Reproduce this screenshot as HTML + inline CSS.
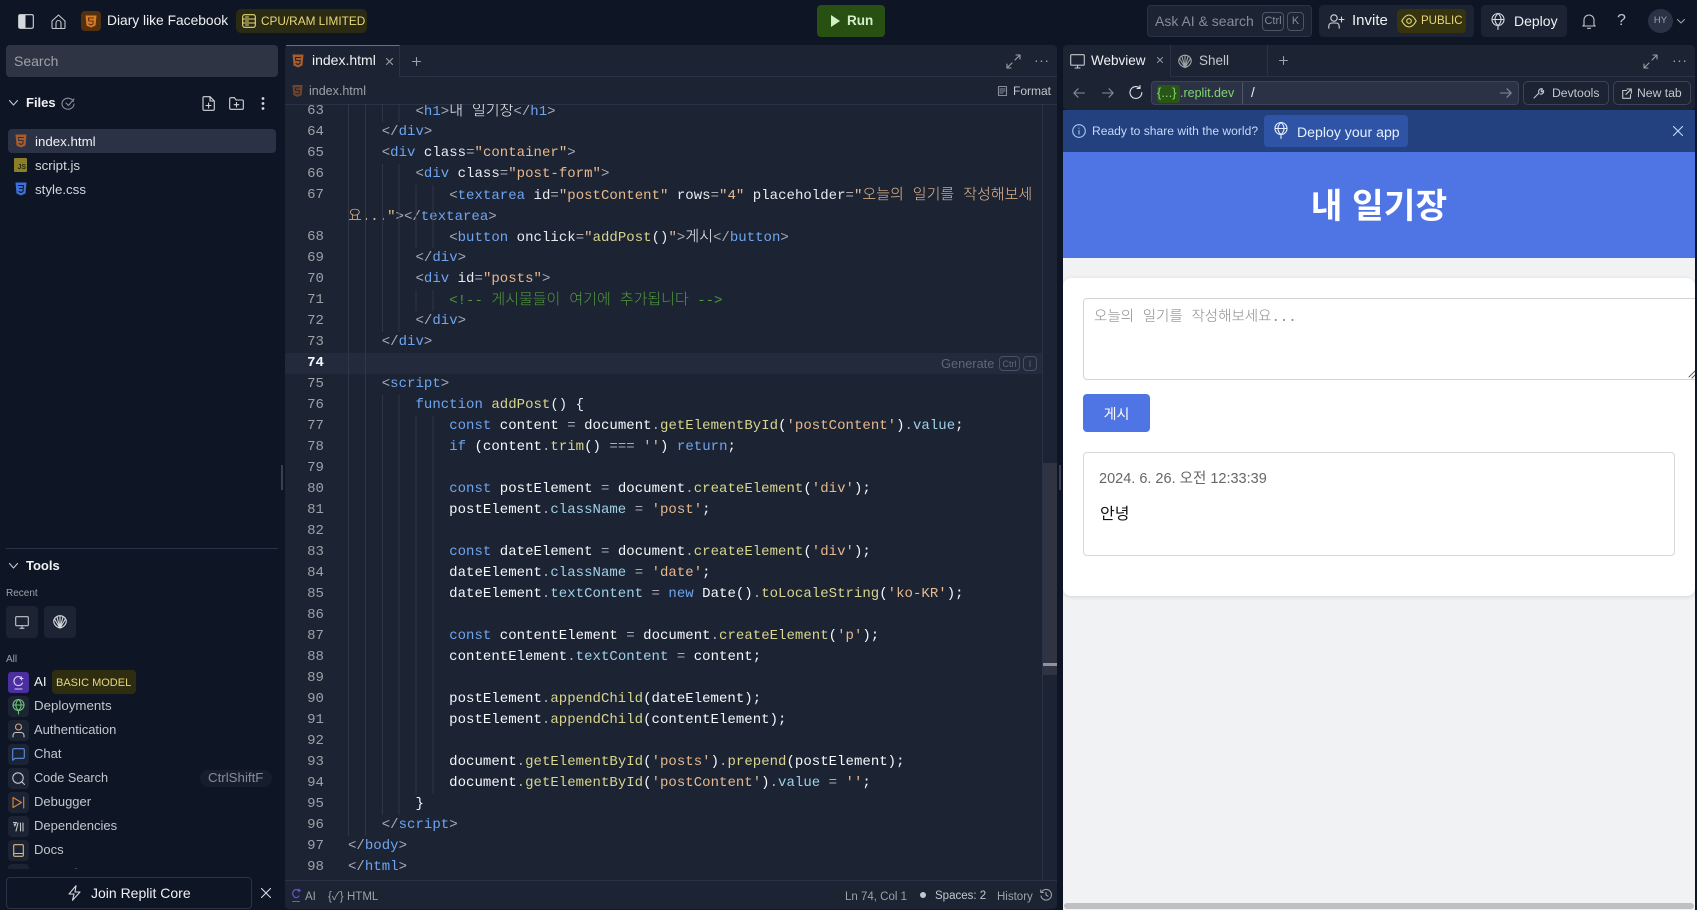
<!DOCTYPE html>
<html lang="ko"><head><meta charset="utf-8"><title>Diary like Facebook</title>
<style>
*{box-sizing:border-box}
html,body{margin:0;padding:0;width:1697px;height:910px;overflow:hidden;background:#0e1525}
body{font-family:"Liberation Sans","Noto Sans CJK KR",sans-serif;color:#c2c8cc;position:relative;font-size:13.3px}
.a{position:absolute}
.t{position:absolute;white-space:pre;line-height:20px}
svg{position:absolute;fill:none;stroke:currentColor;stroke-width:1.1;stroke-linecap:round;stroke-linejoin:round;overflow:visible}
.box{position:absolute;border-radius:4px}
.kbd{position:absolute;border:1px solid #4e5569;border-radius:4px;text-align:center;font-size:11px;color:#9da2a6;line-height:17px;height:19px}
#code{position:absolute;left:285px;top:104px;width:758px;height:776px;overflow:hidden;font-family:"Liberation Mono","Noto Sans CJK KR",monospace;font-size:14px;letter-spacing:.03px;color:#f5f9fc}
#in{position:absolute;left:0;right:0;top:-3px}
.l{position:relative;height:21px;line-height:21px;padding-left:63px;white-space:pre}
.l:before{content:"";position:absolute;left:63px;top:0;height:21px;width:0;background:repeating-linear-gradient(90deg,#2f3648 0 1px,transparent 1px 16.9px)}
.g1:before{width:2px}.g2:before{width:18px}.g3:before{width:35px}.g4:before{width:52px}.g5:before{width:69px}.g6:before{width:86px}.g7:before{width:103px}
.n{position:absolute;left:0;width:39px;text-align:right;font-style:normal;color:#9da2a6}
.p{color:#a8adb8}.b{color:#6fa5f0}.s{color:#e7b98d}.f{color:#d9d68d}.v{color:#9fd0e8}.c{color:#4f9a3c}.w{color:#e8edf2}
.k{font-size:15px;font-weight:300;letter-spacing:0}
.side{color:#c2c8cc}
.sq{position:absolute;left:8px;width:21px;height:21px;background:#1c2333;border-radius:4px}
</style></head><body>

<!-- TOP BAR -->
<svg style="left:18px;top:14px;color:#d5d8dc" width="16" height="15" viewBox="0 0 16 15"><rect x=".7" y=".7" width="14.6" height="13.6" rx="1.5"/><rect x="1" y="1" width="6.5" height="13" fill="#d5d8dc" stroke="none"/></svg>
<svg style="left:51px;top:14px;color:#c2c8cc" width="15" height="15" viewBox="0 0 15 15"><path d="M1 7 7.5 1 14 7v6.5a1 1 0 0 1-1 1H2a1 1 0 0 1-1-1z"/><path d="M5 14.500V9a2.500 2.500 0 0 1 5 0v5.500"/></svg>
<div class="box" style="left:81px;top:11px;width:20px;height:20px;background:#55300f;border-radius:4px"></div>
<svg style="left:85px;top:15px" width="12" height="13" viewBox="0 0 12 13"><path d="M.5.500h11l-1 10L6 12.500 1.500 10.500z" fill="#d97c2a" stroke="none"/><path d="M8.500 3h-5l.3 3h4.400l-.3 3L6 10 4 9" stroke="#55300f" stroke-width="1.100"/></svg>
<div class="t" style="left:107px;top:11px;font-size:13.800px;color:#f0f1f2">Diary like Facebook</div>
<div class="box" style="left:236px;top:9px;width:131px;height:24px;background:#2b2b14;border-radius:5px"></div>
<svg style="left:242px;top:14px;color:#e8d77a" width="14" height="14" viewBox="0 0 14 14"><rect x=".7" y=".7" width="12.600" height="12.600" rx="2"/><path d="M.7 5h12.600M.7 9h12.600M3.500 3h3M3.500 7h3M3.500 11h3"/></svg>
<div class="t" style="left:261px;top:11px;font-size:11.800px;color:#e8d77a">CPU/RAM LIMITED</div>

<div class="box" style="left:817px;top:5px;width:68px;height:32px;background:#275012;border-radius:4px"></div>
<svg style="left:831px;top:15px" width="9" height="12" viewBox="0 0 9 12"><path d="M0 0l9 6-9 6z" fill="#d3f0c0" stroke="none"/></svg>
<div class="t" style="left:847px;top:11px;font-size:13.500px;font-weight:bold;color:#d7eecb">Run</div>

<div class="box" style="left:1147px;top:5px;width:165px;height:32px;background:#1c2333;border:1px solid #2b3245"></div>
<div class="t" style="left:1155px;top:11px;font-size:14px;color:#878c99">Ask AI &amp; search</div>
<div class="kbd" style="left:1262px;top:12px;width:22px;color:#878c99">Ctrl</div>
<div class="kbd" style="left:1287px;top:12px;width:17px;color:#878c99">K</div>

<div class="box" style="left:1319px;top:5px;width:155px;height:32px;background:#1c2333"></div>
<svg style="left:1328px;top:14px;color:#d5d8dc" width="17" height="15" viewBox="0 0 17 15"><circle cx="6" cy="4" r="3.200"/><path d="M.8 14.200V12a3 3 0 0 1 3-3h4.400a3 3 0 0 1 3 3v2.200M13.500 3v5M11 5.500h5"/></svg>
<div class="t" style="left:1352px;top:11px;font-size:15px;color:#f0f1f2">Invite</div>
<div class="box" style="left:1397px;top:9px;width:69px;height:24px;background:#35340f"></div>
<svg style="left:1401px;top:14px;color:#e8d77a" width="16" height="14" viewBox="0 0 16 14"><path d="M.8 7C3 3 5.300 1 8 1s5 2 7.200 6c-2.200 4-4.500 6-7.200 6S3 11 .8 7z"/><circle cx="8" cy="7" r="2.300"/></svg>
<div class="t" style="left:1421px;top:11px;font-size:11.500px;color:#e8d77a">PUBLIC</div>

<div class="box" style="left:1481px;top:5px;width:86px;height:32px;background:#1c2333"></div>
<svg style="left:1491px;top:13px;color:#d5d8dc" width="14" height="17" viewBox="0 0 14 17"><circle cx="7" cy="6.500" r="6"/><path d="M1 6.500h12M7 .5c-4 3.500-4 8.500 0 12M7 .5c4 3.500 4 8.500 0 12M7 12.500v4"/></svg>
<div class="t" style="left:1514px;top:11px;font-size:14px;color:#f0f1f2">Deploy</div>
<svg style="left:1582px;top:14px;color:#c2c8cc" width="14" height="15" viewBox="0 0 14 15"><path d="M2 11V6a5 5 0 0 1 10 0v5l1.200 1H.8zM5.500 14.300h3"/></svg>
<div class="t" style="left:1617px;top:11px;font-size:16px;color:#c2c8cc">?</div>
<div class="a" style="left:1648px;top:9px;width:25px;height:24px;border-radius:50%;background:#2b3245;color:#9da2a6;font-size:9.500px;line-height:24px;text-align:center">HY</div>
<svg style="left:1677px;top:19px;color:#9da2a6" width="8" height="5" viewBox="0 0 8 5"><path d="M.5.500 4 4 7.500.5"/></svg>

<!-- SIDEBAR -->
<div class="box" style="left:6px;top:45px;width:272px;height:32px;background:#2f3444;border-radius:4px"></div>
<div class="t" style="left:14px;top:51px;font-size:14px;color:#9da2a6">Search</div>
<svg style="left:9px;top:100px;color:#c2c8cc" width="9" height="6" viewBox="0 0 9 6"><path d="M.5.500 4.500 5 8.500.5"/></svg>
<div class="t" style="left:26px;top:93px;font-size:13px;font-weight:bold;color:#f0f1f2">Files</div>
<svg style="left:61px;top:97px;color:#878c99" width="14" height="13" viewBox="0 0 14 13"><path d="M12.500 4.500A6 5.500 0 1 0 13 7M5 6l2.500 2.500L13 2"/></svg>
<svg style="left:202px;top:96px;color:#d5d8dc" width="13" height="15" viewBox="0 0 13 15"><path d="M1 1.500A1 1 0 0 1 2 .7h6L12.300 5v8.300a1 1 0 0 1-1 1H2a1 1 0 0 1-1-1zM8 .7V5h4.300M6.600 7v5M4 9.500h5"/></svg>
<svg style="left:229px;top:97px;color:#d5d8dc" width="15" height="13" viewBox="0 0 15 13"><path d="M.7 1.700a1 1 0 0 1 1-1h3.800L7 3h6.300a1 1 0 0 1 1 1v7.300a1 1 0 0 1-1 1H1.700a1 1 0 0 1-1-1zM7.500 5.500v4.500M5.200 7.700h4.600"/></svg>
<svg style="left:261px;top:97px;color:#d5d8dc" width="4" height="13" viewBox="0 0 4 13"><g fill="#d5d8dc" stroke="none"><circle cx="2" cy="1.500" r="1.400"/><circle cx="2" cy="6.500" r="1.400"/><circle cx="2" cy="11.500" r="1.400"/></g></svg>

<div class="box" style="left:8px;top:129px;width:268px;height:24px;background:#2b3245"></div>
<svg style="left:15px;top:134px" width="12" height="14" viewBox="0 0 12 14"><path d="M.5.500h11l-1 11L6 13.500 1.500 11.500z" fill="#a85c2a" stroke="none"/><path d="M8.500 3.500h-5l.3 3h4.400l-.3 3L6 10.500l-2-1" stroke="#2b3245" stroke-width="1"/></svg>
<div class="t" style="left:35px;top:132px;color:#f0f1f2">index.html</div>
<div class="box" style="left:14px;top:158px;width:13px;height:14px;background:#8b8027;border-radius:1px;color:#2b2b14;font-size:7px;font-weight:bold;line-height:19px;text-align:right;padding-right:1px">JS</div>
<div class="t" style="left:35px;top:156px;color:#d5d8dc">script.js</div>
<svg style="left:15px;top:182px" width="12" height="14" viewBox="0 0 12 14"><path d="M.5.500h11l-1 11L6 13.500 1.500 11.500z" fill="#3f6fd8" stroke="none"/><path d="M3.500 3.500h5l-.3 3H4.500M8.200 6.500 8 9.500 6 10.500l-2-1" stroke="#0e1525" stroke-width="1"/></svg>
<div class="t" style="left:35px;top:180px;color:#d5d8dc">style.css</div>

<div class="a" style="left:6px;top:548px;width:272px;height:1px;background:#2b3245"></div>
<svg style="left:9px;top:563px;color:#c2c8cc" width="9" height="6" viewBox="0 0 9 6"><path d="M.5.500 4.500 5 8.500.5"/></svg>
<div class="t" style="left:26px;top:556px;font-size:13px;font-weight:bold;color:#f0f1f2">Tools</div>
<div class="t" style="left:6px;top:584px;font-size:10px;color:#9da2a6">Recent</div>
<div class="box" style="left:6px;top:606px;width:32px;height:32px;background:#1c2333"></div>
<div class="box" style="left:44px;top:606px;width:32px;height:32px;background:#1c2333"></div>
<svg style="left:15px;top:616px;color:#c2c8cc" width="14" height="13" viewBox="0 0 14 13"><rect x=".7" y=".7" width="12.600" height="9" rx="1"/><path d="M5 12.300h4M7 10v2"/></svg>
<svg style="left:53px;top:615px;color:#d5d8dc" width="14" height="14" viewBox="0 0 14 14"><path d="M7 13C3 12 .7 9 .7 6 1 3 4 .7 7 .7s6 2.300 6.300 5.300c0 3-2.300 6-6.300 7zM7 13V1M7 13 4 2M7 13 10 2M7 13 1.500 4M7 13 12.500 4"/></svg>
<div class="t" style="left:6px;top:650px;font-size:10px;color:#9da2a6">All</div>

<div class="sq" style="top:672px;background:#4b2fa0;border-radius:3px"></div>
<svg style="left:12px;top:675px;color:#d8cdfa" width="13" height="15" viewBox="0 0 13 15"><path d="M9.500 2.800A4.500 4.500 0 1 0 10.500 8M3 14h7M8 3.500h3M9.500 2v3"/></svg>
<div class="t" style="left:34px;top:672px;color:#f0f1f2">AI</div>
<div class="box" style="left:52px;top:670px;width:84px;height:24px;background:#2e2d10"></div>
<div class="t" style="left:56px;top:673px;font-size:11px;color:#e8d77a">BASIC MODEL</div>

<div class="sq" style="top:696px"></div>
<svg style="left:12px;top:699px;color:#6bc47a" width="13" height="16" viewBox="0 0 13 16"><circle cx="6.500" cy="6" r="5.500"/><path d="M1 6h11M6.500.5c-3.500 3-3.500 8 0 11M6.500.5c3.500 3 3.500 8 0 11M6.500 11.500V15"/></svg>
<div class="t" style="left:34px;top:696px">Deployments</div>

<div class="sq" style="top:720px"></div>
<svg style="left:12px;top:723px;color:#d9a583" width="13" height="15" viewBox="0 0 13 15"><circle cx="6.500" cy="4" r="3"/><path d="M1 14v-1.500A3 3 0 0 1 4 9.500h5a3 3 0 0 1 3 3V14" stroke="#c2c8cc"/></svg>
<div class="t" style="left:34px;top:720px;font-size:13px">Authentication</div>

<div class="sq" style="top:744px"></div>
<svg style="left:12px;top:748px;color:#5b8fe0" width="13" height="13" viewBox="0 0 13 13"><path d="M.7 2a1.300 1.300 0 0 1 1.300-1.300h9A1.300 1.300 0 0 1 12.300 2v7A1.300 1.300 0 0 1 11 10.300H3L.7 12.300z"/></svg>
<div class="t" style="left:34px;top:744px;font-size:13px">Chat</div>

<div class="sq" style="top:768px"></div>
<svg style="left:12px;top:772px;color:#c2c8cc" width="13" height="13" viewBox="0 0 13 13"><circle cx="6" cy="6" r="5.200"/><path d="m9.800 9.800 2.700 2.700"/></svg>
<div class="t" style="left:34px;top:768px;font-size:12.700px">Code Search</div>
<div class="box" style="left:200px;top:770px;width:72px;height:17px;background:#161d2d;border-radius:8px"></div>
<div class="t" style="left:208px;top:768px;color:#878c99">CtrlShiftF</div>

<div class="sq" style="top:792px"></div>
<svg style="left:12px;top:796px;color:#d98a3c" width="13" height="13" viewBox="0 0 13 13"><path d="M1 1.500 9.500 6.500 1 11.500zM11.700 1v11"/></svg>
<div class="t" style="left:34px;top:792px;font-size:13px">Debugger</div>

<div class="sq" style="top:816px"></div>
<svg style="left:13px;top:821px;color:#c2c8cc" width="11" height="11" viewBox="0 0 11 11"><path d="M.5 1.500h3L1.500 5M5 2 3 10M7.500 2v8M10 2v8M1 3l1.500 1"/></svg>
<div class="t" style="left:34px;top:816px;font-size:13px">Dependencies</div>

<div class="sq" style="top:840px"></div>
<svg style="left:13px;top:844px;color:#d9b98a" width="11" height="13" viewBox="0 0 11 13"><rect x=".7" y=".7" width="9.600" height="11.600" rx="1"/><path d="M.7 9.500h9.600"/></svg>
<div class="t" style="left:34px;top:840px;font-size:13px">Docs</div>

<div class="a" style="left:0;top:864px;width:283px;height:5px;overflow:hidden">
  <div class="sq" style="top:0"></div>
  <div class="t" style="left:34px;top:0">Extension Store</div>
</div>

<div class="box" style="left:6px;top:877px;width:246px;height:32px;border:1px solid #2b3245;background:#0e1525"></div>
<svg style="left:68px;top:885px;color:#d5d8dc" width="13" height="16" viewBox="0 0 13 16"><path d="M8 .7 1 9h5l-1.500 6.300L12 7H7z"/></svg>
<div class="t" style="left:91px;top:883px;font-size:14px;color:#f0f1f2">Join Replit Core</div>
<svg style="left:261px;top:888px;color:#d5d8dc" width="10" height="10" viewBox="0 0 10 10"><path d="M.5.500l9 9M9.500.5l-9 9"/></svg>

<!-- EDITOR -->
<div class="box" style="left:285px;top:45px;width:772px;height:864px;background:#1c2333;border-radius:4px"></div>
<div class="a" style="left:286px;top:45px;width:114px;height:32px;border-top:1px solid #3c74d8;border-right:1px solid #2b3245"></div>
<div class="a" style="left:400px;top:76px;width:657px;height:1px;background:#2b3245"></div>
<div class="a" style="left:285px;top:104px;width:772px;height:1px;background:#2b3245"></div>
<svg style="left:292px;top:54px" width="12" height="14" viewBox="0 0 12 14"><path d="M.5.500h11l-1 11L6 13.500 1.500 11.500z" fill="#a85c2a" stroke="none"/><path d="M8.500 3.500h-5l.3 3h4.400l-.3 3L6 10.500l-2-1" stroke="#1c2333" stroke-width="1"/></svg>
<div class="t" style="left:312px;top:50px;font-size:14px;color:#f0f1f2">index.html</div>
<svg style="left:386px;top:58px;color:#9da2a6" width="7" height="7" viewBox="0 0 7 7"><path d="M.5.500l6 6M6.500.5l-6 6"/></svg>
<svg style="left:412px;top:57px;color:#9da2a6" width="9" height="9" viewBox="0 0 9 9"><path d="M4.500.5v8M.5 4.500h8"/></svg>
<svg style="left:1006px;top:54px;color:#9da2a6" width="15" height="15" viewBox="0 0 15 15"><path d="M9 6 14 1M10 1h4v4M6 9l-5 5M1 10v4h4"/></svg>
<div class="t" style="left:1034px;top:50px;font-size:14px;color:#9da2a6;letter-spacing:.5px">···</div>
<svg style="left:292px;top:84px;opacity:.6" width="11" height="14" viewBox="0 0 12 14"><path d="M.5.500h11l-1 11L6 13.500 1.500 11.500z" fill="#a85c2a" stroke="none"/><path d="M8.500 3.500h-5l.3 3h4.400l-.3 3L6 10.500l-2-1" stroke="#1c2333" stroke-width="1"/></svg>
<div class="t" style="left:309px;top:81px;font-size:12.500px;color:#9da2a6">index.html</div>
<svg style="left:998px;top:86px;color:#878c99" width="9" height="10" viewBox="0 0 9 10"><rect x=".5" y=".5" width="8" height="9"/><path d="M2 3h5M2 5h5M2 7h3"/></svg>
<div class="t" style="left:1013px;top:81px;font-size:12px;color:#c2c8cc">Format</div>

<div id="code"><div id="in">
<div class="l g4"><i class="n">63</i>        <span class="p">&lt;</span><span class="b">h1</span><span class="p">&gt;</span><span class="k">내 일기장</span><span class="p">&lt;/</span><span class="b">h1</span><span class="p">&gt;</span></div>
<div class="l g2"><i class="n">64</i>    <span class="p">&lt;/</span><span class="b">div</span><span class="p">&gt;</span></div>
<div class="l g2"><i class="n">65</i>    <span class="p">&lt;</span><span class="b">div</span> <span class="w">class</span><span class="p">=</span><span class="s">"container"</span><span class="p">&gt;</span></div>
<div class="l g4"><i class="n">66</i>        <span class="p">&lt;</span><span class="b">div</span> <span class="w">class</span><span class="p">=</span><span class="s">"post-form"</span><span class="p">&gt;</span></div>
<div class="l g6"><i class="n">67</i>            <span class="p">&lt;</span><span class="b">textarea</span> <span class="w">id</span><span class="p">=</span><span class="s">"postContent"</span> <span class="w">rows</span><span class="p">=</span><span class="s">"4"</span> <span class="w">placeholder</span><span class="p">=</span><span class="s">"<span class="k">오늘의 일기를 작성해보세</span></span></div>
<div class="l g6"><span class="s"><span class="k">요</span>..."</span><span class="p">&gt;&lt;/</span><span class="b">textarea</span><span class="p">&gt;</span></div>
<div class="l g6"><i class="n">68</i>            <span class="p">&lt;</span><span class="b">button</span> <span class="w">onclick</span><span class="p">=</span><span class="s">"</span><span class="f">addPost</span><span class="w">()</span><span class="s">"</span><span class="p">&gt;</span><span class="k">게시</span><span class="p">&lt;/</span><span class="b">button</span><span class="p">&gt;</span></div>
<div class="l g4"><i class="n">69</i>        <span class="p">&lt;/</span><span class="b">div</span><span class="p">&gt;</span></div>
<div class="l g4"><i class="n">70</i>        <span class="p">&lt;</span><span class="b">div</span> <span class="w">id</span><span class="p">=</span><span class="s">"posts"</span><span class="p">&gt;</span></div>
<div class="l g6"><i class="n">71</i>            <span class="c">&lt;!-- <span class="k">게시물들이 여기에 추가됩니다</span> --&gt;</span></div>
<div class="l g4"><i class="n">72</i>        <span class="p">&lt;/</span><span class="b">div</span><span class="p">&gt;</span></div>
<div class="l g2"><i class="n">73</i>    <span class="p">&lt;/</span><span class="b">div</span><span class="p">&gt;</span></div>
<div class="l g2" style="background:#232a3c"><i class="n" style="color:#f5f9fc;font-weight:bold">74</i></div>
<div class="l g2"><i class="n">75</i>    <span class="p">&lt;</span><span class="b">script</span><span class="p">&gt;</span></div>
<div class="l g4"><i class="n">76</i>        <span class="b">function</span> <span class="f">addPost</span><span class="w">() {</span></div>
<div class="l g6"><i class="n">77</i>            <span class="b">const</span> content <span class="p">=</span> document<span class="p">.</span><span class="f">getElementById</span>(<span class="s">'postContent'</span>)<span class="p">.</span><span class="v">value</span>;</div>
<div class="l g6"><i class="n">78</i>            <span class="b">if</span> (content<span class="p">.</span><span class="f">trim</span>() <span class="p">===</span> <span class="s">''</span>) <span class="b">return</span>;</div>
<div class="l g6"><i class="n">79</i></div>
<div class="l g6"><i class="n">80</i>            <span class="b">const</span> postElement <span class="p">=</span> document<span class="p">.</span><span class="f">createElement</span>(<span class="s">'div'</span>);</div>
<div class="l g6"><i class="n">81</i>            postElement<span class="p">.</span><span class="v">className</span> <span class="p">=</span> <span class="s">'post'</span>;</div>
<div class="l g6"><i class="n">82</i></div>
<div class="l g6"><i class="n">83</i>            <span class="b">const</span> dateElement <span class="p">=</span> document<span class="p">.</span><span class="f">createElement</span>(<span class="s">'div'</span>);</div>
<div class="l g6"><i class="n">84</i>            dateElement<span class="p">.</span><span class="v">className</span> <span class="p">=</span> <span class="s">'date'</span>;</div>
<div class="l g6"><i class="n">85</i>            dateElement<span class="p">.</span><span class="v">textContent</span> <span class="p">=</span> <span class="b">new</span> Date()<span class="p">.</span><span class="f">toLocaleString</span>(<span class="s">'ko-KR'</span>);</div>
<div class="l g6"><i class="n">86</i></div>
<div class="l g6"><i class="n">87</i>            <span class="b">const</span> contentElement <span class="p">=</span> document<span class="p">.</span><span class="f">createElement</span>(<span class="s">'p'</span>);</div>
<div class="l g6"><i class="n">88</i>            contentElement<span class="p">.</span><span class="v">textContent</span> <span class="p">=</span> content;</div>
<div class="l g6"><i class="n">89</i></div>
<div class="l g6"><i class="n">90</i>            postElement<span class="p">.</span><span class="f">appendChild</span>(dateElement);</div>
<div class="l g6"><i class="n">91</i>            postElement<span class="p">.</span><span class="f">appendChild</span>(contentElement);</div>
<div class="l g6"><i class="n">92</i></div>
<div class="l g6"><i class="n">93</i>            document<span class="p">.</span><span class="f">getElementById</span>(<span class="s">'posts'</span>)<span class="p">.</span><span class="f">prepend</span>(postElement);</div>
<div class="l g6"><i class="n">94</i>            document<span class="p">.</span><span class="f">getElementById</span>(<span class="s">'postContent'</span>)<span class="p">.</span><span class="v">value</span> <span class="p">=</span> <span class="s">''</span>;</div>
<div class="l g4"><i class="n">95</i>        }</div>
<div class="l g2"><i class="n">96</i>    <span class="p">&lt;/</span><span class="b">script</span><span class="p">&gt;</span></div>
<div class="l"><i class="n">97</i><span class="p">&lt;/</span><span class="b">body</span><span class="p">&gt;</span></div>
<div class="l"><i class="n">98</i><span class="p">&lt;/</span><span class="b">html</span><span class="p">&gt;</span></div>
</div></div>

<div class="t" style="left:941px;top:354px;font-size:12.800px;color:#5f6675">Generate</div>
<div class="kbd" style="left:999px;top:356px;width:21px;height:15px;line-height:14px;font-size:9px;color:#5f6675;border-color:#4a5164">Ctrl</div>
<div class="kbd" style="left:1023px;top:356px;width:14px;height:15px;line-height:14px;font-size:9px;color:#5f6675;border-color:#4a5164">I</div>

<div class="a" style="left:1042px;top:105px;width:1px;height:775px;background:#2b3245"></div>
<div class="a" style="left:1043px;top:463px;width:14px;height:212px;background:#2f3342"></div>
<div class="a" style="left:1043px;top:663px;width:14px;height:3px;background:#8f939e"></div>
<div class="a" style="left:285px;top:880px;width:772px;height:1px;background:#2b3245"></div>
<div class="a" style="left:281px;top:465px;width:2px;height:25px;background:#3a4050"></div>
<div class="a" style="left:1059px;top:465px;width:2px;height:25px;background:#3a4050"></div>

<svg style="left:291px;top:888px;color:#6b57d8" width="10" height="15" viewBox="0 0 10 15"><path d="M7.500 2.500A3.500 4 0 1 0 8 8M1.500 13.500h7M6.500 2.500h3M8 1v3"/></svg>
<div class="t" style="left:305px;top:887px;font-size:11.500px;color:#9da2a6">AI</div>
<div class="t" style="left:328px;top:887px;font-size:11.500px;color:#9da2a6">{✓}</div>
<div class="t" style="left:347px;top:887px;font-size:11.500px;color:#9da2a6">HTML</div>
<div class="t" style="left:845px;top:887px;font-size:11.500px;color:#9da2a6">Ln 74, Col 1</div>
<div class="a" style="left:920px;top:892px;width:6px;height:6px;border-radius:50%;background:#c2c8cc"></div>
<div class="t" style="left:935px;top:886px;font-size:11.500px;color:#c2c8cc">Spaces: 2</div>
<div class="t" style="left:997px;top:887px;font-size:11.500px;color:#9da2a6">History</div>
<svg style="left:1040px;top:889px;color:#9da2a6" width="12" height="12" viewBox="0 0 12 12"><path d="M2 2.500A5.300 5.300 0 1 1 1 7M.8 1v2.500h2.500M6 3.500V6l2 1.200"/></svg>

<!-- WEBVIEW PANEL -->
<div class="box" style="left:1063px;top:45px;width:632px;height:65px;background:#1c2333"></div>
<div class="a" style="left:1170px;top:45px;width:1px;height:31px;background:#2b3245"></div>
<div class="a" style="left:1267px;top:45px;width:1px;height:31px;background:#2b3245"></div>
<div class="a" style="left:1170px;top:76px;width:525px;height:1px;background:#2b3245"></div>
<svg style="left:1070px;top:54px;color:#c2c8cc" width="15" height="15" viewBox="0 0 15 15"><rect x=".7" y=".7" width="13.600" height="10.500" rx="1"/><path d="M5 14h5M7.500 11.500V14"/></svg>
<div class="t" style="left:1091px;top:51px;font-size:13.500px;color:#f0f1f2">Webview</div>
<svg style="left:1157px;top:57px;color:#9da2a6" width="6" height="6" viewBox="0 0 7 7"><path d="M.5.500l6 6M6.500.5l-6 6"/></svg>
<svg style="left:1178px;top:54px;color:#9da2a6" width="14" height="15" viewBox="0 0 14 14"><path d="M7 13C3 12 .7 9 .7 6 1 3 4 .7 7 .7s6 2.300 6.300 5.300c0 3-2.300 6-6.300 7zM7 13V1M7 13 4 2M7 13 10 2M7 13 1.500 4M7 13 12.500 4"/></svg>
<div class="t" style="left:1199px;top:51px;font-size:13.500px;color:#c2c8cc">Shell</div>
<svg style="left:1279px;top:56px;color:#9da2a6" width="9" height="9" viewBox="0 0 9 9"><path d="M4.500.5v8M.5 4.500h8"/></svg>
<svg style="left:1643px;top:54px;color:#9da2a6" width="15" height="15" viewBox="0 0 15 15"><path d="M9 6 14 1M10 1h4v4M6 9l-5 5M1 10v4h4"/></svg>
<div class="t" style="left:1672px;top:50px;font-size:14px;color:#9da2a6;letter-spacing:.5px">···</div>

<svg style="left:1073px;top:88px;color:#878c99" width="12" height="10" viewBox="0 0 12 10"><path d="M11.500 5H.8M5 .8.800 5 5 9.200"/></svg>
<svg style="left:1102px;top:88px;color:#878c99" width="12" height="10" viewBox="0 0 12 10"><path d="M.5 5h10.700M7 .8 11.200 5 7 9.200"/></svg>
<svg style="left:1129px;top:85px;color:#e0e3e6" width="14" height="15" viewBox="0 0 14 15"><path d="M12.800 7.500a5.900 5.900 0 1 1-2-4.400M11 .5v3H8"/></svg>
<div class="box" style="left:1151px;top:81px;width:368px;height:24px;background:#2b3245;border:1px solid #3c445c"></div>
<div class="box" style="left:1157px;top:85px;width:23px;height:18px;background:#2a5516;border-radius:3px"></div>
<div class="t" style="left:1157px;top:83px;font-size:13px;color:#7fd66b">{...}</div>
<div class="t" style="left:1180px;top:83px;font-size:12.500px;color:#7fd66b">.replit.dev</div>
<div class="a" style="left:1242px;top:82px;width:1px;height:22px;background:#4e5569"></div>
<div class="t" style="left:1251px;top:83px;font-size:13.500px;color:#f0f1f2">/</div>
<svg style="left:1500px;top:88px;color:#878c99" width="12" height="10" viewBox="0 0 12 10"><path d="M.5 5h10.700M7 .8 11.200 5 7 9.200"/></svg>
<div class="box" style="left:1523px;top:81px;width:86px;height:24px;border:1px solid #3c445c;border-radius:5px"></div>
<svg style="left:1533px;top:87px;color:#c2c8cc" width="11" height="12" viewBox="0 0 11 12"><path d="M1 11l5-5a2.800 2.800 0 0 1 3.500-4L8 4l1 1 1.500-1.500A2.800 2.800 0 0 1 7 7"/></svg>
<div class="t" style="left:1552px;top:83px;font-size:12.200px;color:#c2c8cc">Devtools</div>
<div class="box" style="left:1613px;top:81px;width:78px;height:24px;border:1px solid #3c445c;border-radius:5px"></div>
<svg style="left:1622px;top:88px;color:#c2c8cc" width="10" height="11" viewBox="0 0 10 11"><path d="M8.500 6.500v3.800H.7V2.500h3.800M5 1h4.300v4.300M9.300 1 4 6.300"/></svg>
<div class="t" style="left:1637px;top:83px;font-size:12.200px;color:#c2c8cc">New tab</div>

<div class="a" style="left:1063px;top:110px;width:632px;height:42px;background:#23407f"></div>
<svg style="left:1072px;top:124px;color:#a8c6f5" width="14" height="14" viewBox="0 0 14 14"><circle cx="7" cy="7" r="6.300"/><path d="M7 6.500V10M7 4v.3"/></svg>
<div class="t" style="left:1092px;top:121px;font-size:12.100px;color:#c5dafb">Ready to share with the world?</div>
<div class="box" style="left:1264px;top:115px;width:144px;height:32px;background:#2f54a6"></div>
<svg style="left:1274px;top:122px;color:#e6effd" width="14" height="17" viewBox="0 0 14 17"><circle cx="7" cy="6.500" r="6"/><path d="M1 6.500h12M7 .5c-4 3.500-4 8.500 0 12M7 .5c4 3.500 4 8.500 0 12M7 12.500v4"/></svg>
<div class="t" style="left:1297px;top:122px;font-size:14.100px;color:#e6effd">Deploy your app</div>
<svg style="left:1673px;top:126px;color:#c5dafb" width="10" height="10" viewBox="0 0 10 10"><path d="M.5.500l9 9M9.500.5l-9 9"/></svg>

<!-- PAGE -->
<div class="a" id="page" style="left:1063px;top:152px;width:632px;height:758px;background:#f0f2f4;overflow:hidden;color:#000">
  <div class="a" style="left:0;top:0;width:632px;height:106px;background:#4f74e4;color:#fff;text-align:center;font-size:34.500px;font-weight:bold;line-height:110px;letter-spacing:0;font-family:'Liberation Sans','Noto Sans CJK KR',sans-serif">내 일기장</div>
  <div class="a" style="left:0;top:126px;width:632px;height:318px;background:#fff;border-radius:8px;box-shadow:0 1px 4px rgba(0,0,0,.12)"></div>
  <div class="a" style="left:20px;top:146px;width:640px;height:82px;border:1px solid #d2d4d7;border-radius:4px;background:#fff"></div>
  <div class="t" style="left:31px;top:156px;font-family:'Liberation Mono','Noto Sans CJK KR',monospace;font-size:14px;color:#8b8b8b"><span style="font-size:14.500px;font-weight:300">오늘의 일기를 작성해보세요</span>...</div>
  <svg style="left:626px;top:217px;color:#555" width="6" height="10" viewBox="0 0 6 10"><path d="M0 8 8 0M3 9 9 3" stroke-width=".9"/></svg>
  <div class="a" style="left:20px;top:242px;width:67px;height:38px;background:#4f74e4;border-radius:4px;color:#fff;font-size:14px;line-height:40px;text-align:center">게시</div>
  <div class="a" style="left:20px;top:300px;width:592px;height:104px;border:1px solid #d6d8da;border-radius:4px;background:#fff"></div>
  <div class="t" style="left:36px;top:317px;font-size:14.500px;color:#666">2024. 6. 26. 오전 12:33:39</div>
  <div class="t" style="left:37px;top:353px;font-size:16px;color:#111">안녕</div>
  <div class="a" style="left:1px;top:751px;width:630px;height:6px;background:#bfc0c3;border-radius:3px"></div>
</div>

</body></html>
